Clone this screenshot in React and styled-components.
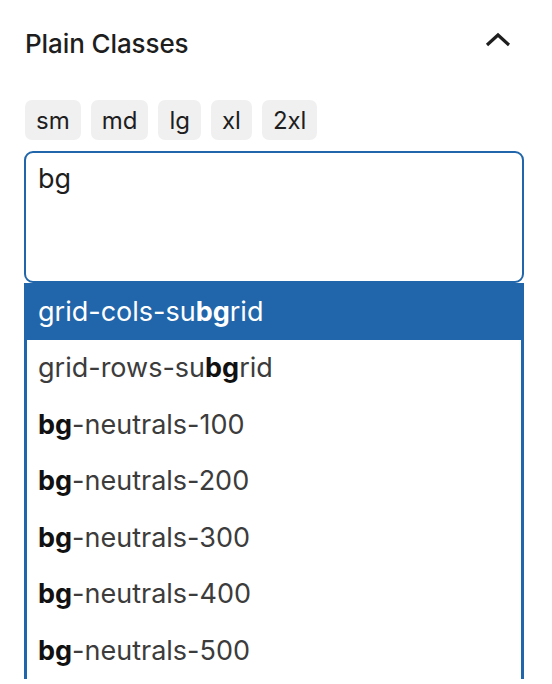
import React from "react";
import styled, { createGlobalStyle } from "styled-components";

const Global = createGlobalStyle`
  html, body { margin: 0; padding: 0; background: #fff; }
  body { font-family: Inter, "Noto Sans", sans-serif; -webkit-font-smoothing: antialiased; }
`;

const BLUE = "#2166aa";

const Panel = styled.div`
  width: 552px;
  height: 684px;
  overflow: hidden;
  padding: 0 28px 0 24px;
  box-sizing: border-box;
`;

const Header = styled.div`
  display: flex;
  align-items: center;
  justify-content: space-between;
  height: 86px;
`;

const Title = styled.h2`
  margin: 0;
  font-size: 26px;
  font-weight: 500;
  color: #1e1e1e;
  padding-left: 1px;
  letter-spacing: -0.1px;
`;

const Toggle = styled.button`
  border: 0;
  background: none;
  padding: 0;
  margin-right: 13px;
  margin-top: -6px;
  display: flex;
  color: #1e1e1e;
`;

const Pills = styled.div`
  display: flex;
  gap: 10px;
  margin-top: 14px;
  margin-left: 1px;
`;

const Pill = styled.span`
  display: inline-flex;
  align-items: center;
  height: 40px;
  padding: 0 11px;
  background: #f0f0f0;
  border-radius: 7px;
  font-size: 24px;
  color: #1e1e1e;
`;

const Field = styled.div`
  margin-top: 11px;
`;

const Input = styled.div`
  height: 132px;
  box-sizing: border-box;
  border: 2.5px solid ${BLUE};
  border-radius: 9px;
  padding: 9px 12px;
  font-size: 27px;
  color: #1e1e1e;
`;

const List = styled.ul`
  list-style: none;
  margin: 0;
  padding: 0;
  border-left: 3px solid ${BLUE};
  border-right: 3px solid ${BLUE};
`;

const Item = styled.li`
  height: 56.5px;
  display: flex;
  align-items: center;
  font-size: 27px;
  color: ${(p) => (p.$active ? "#fff" : "#3c3c3c")};
  background: ${(p) => (p.$active ? BLUE : "#fff")};
  margin: 0 ${(p) => (p.$active ? "-3px" : "0")};
  padding: 0 12px 0 ${(p) => (p.$active ? "14px" : "11px")};
  b {
    font-weight: 700;
    color: ${(p) => (p.$active ? "#fff" : "#111")};
  }
`;

const items = [
  ["grid-cols-su", "bg", "rid"],
  ["grid-rows-su", "bg", "rid"],
  ["", "bg", "-neutrals-100"],
  ["", "bg", "-neutrals-200"],
  ["", "bg", "-neutrals-300"],
  ["", "bg", "-neutrals-400"],
  ["", "bg", "-neutrals-500"],
];

export default function App() {
  return (
    <>
      <Global />
      <Panel>
        <Header>
          <Title>Plain Classes</Title>
          <Toggle aria-label="Collapse">
            <svg width="26" height="16" viewBox="0 0 26 16">
              <polyline
                points="2,13 13,3 24,13"
                fill="none"
                stroke="currentColor"
                strokeWidth="3.2"
              />
            </svg>
          </Toggle>
        </Header>
        <Pills>
          {["sm", "md", "lg", "xl", "2xl"].map((s) => (
            <Pill key={s}>{s}</Pill>
          ))}
        </Pills>
        <Field>
          <Input>bg</Input>
          <List>
            {items.map(([a, b, c], i) => (
              <Item key={i} $active={i === 0}>
                <span>
                  {a}
                  <b>{b}</b>
                  {c}
                </span>
              </Item>
            ))}
          </List>
        </Field>
      </Panel>
    </>
  );
}
